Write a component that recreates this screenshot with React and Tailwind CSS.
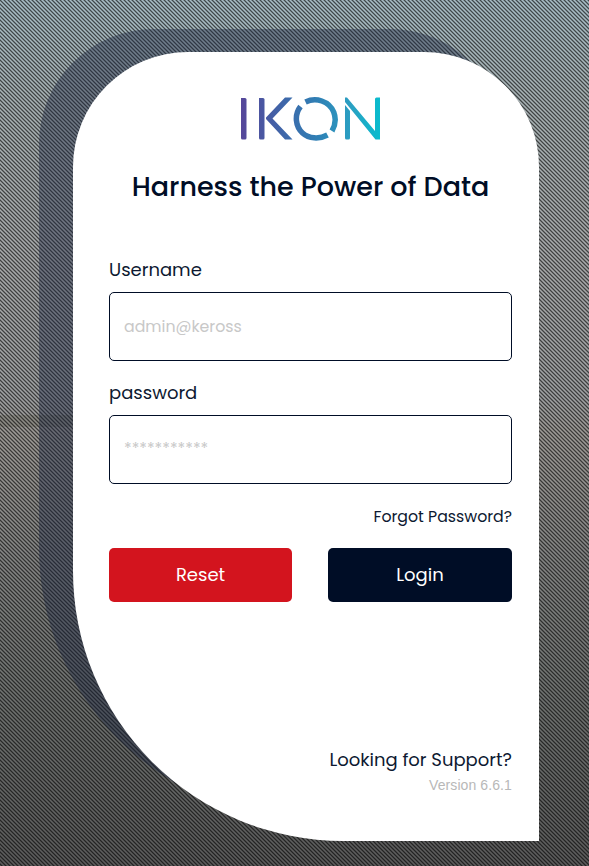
import React from "react";

function Backdrop() {
  return (
    <svg className="absolute inset-0 h-full w-full" aria-hidden="true">
      <defs>
        <linearGradient id="sky" x1="0" y1="0" x2="0" y2="1">
          <stop offset="0" stopColor="#a8bec6" />
          <stop offset="0.12" stopColor="#a8b2b4" />
          <stop offset="0.3" stopColor="#a8aaab" />
          <stop offset="0.46" stopColor="#a0a2a3" />
          <stop offset="0.5" stopColor="#9e9b97" />
          <stop offset="0.65" stopColor="#848584" />
          <stop offset="0.82" stopColor="#6e716f" />
          <stop offset="1" stopColor="#5c5c5c" />
        </linearGradient>
        <pattern id="weave" width="4" height="4" patternUnits="userSpaceOnUse" shapeRendering="crispEdges">
          <path d="M0 0h1v1h-1zM1 1h1v1h-1zM2 2h1v1h-1zM3 3h1v1h-1z" fill="#000" fillOpacity="0.62" />
          <path d="M1 0h1v1h-1zM2 1h1v1h-1zM3 2h1v1h-1zM0 3h1v1h-1z" fill="#000" fillOpacity="0.28" />
          <path d="M3 0h1v1h-1zM0 1h1v1h-1zM1 2h1v1h-1zM2 3h1v1h-1z" fill="#000" fillOpacity="0.24" />
        </pattern>
      </defs>
      <rect width="100%" height="100%" fill="url(#sky)" />
      <rect y="415" width="80" height="12" fill="#4b4d32" fillOpacity="0.2" />
      <rect width="100%" height="100%" fill="url(#weave)" />
    </svg>
  );
}

function Logo() {
  return (
    <svg width="140" height="44" viewBox="0 0 140 44" fill="none" role="img" aria-label="IKON">
      <defs>
        <linearGradient id="brand" gradientUnits="userSpaceOnUse" x1="0" y1="0" x2="140" y2="0">
          <stop offset="0" stopColor="#56479a" />
          <stop offset="0.3" stopColor="#3f66a9" />
          <stop offset="0.55" stopColor="#2f80b5" />
          <stop offset="0.78" stopColor="#2b9fc2" />
          <stop offset="1" stopColor="#08bdce" />
        </linearGradient>
      </defs>
      <g fill="url(#brand)">
        <path d="M0 1H4Q5.500 1 5.500 2.500V41Q5.500 42.500 4 42.500H1.500Q0 42.500 0 41Z" />
        <path d="M18 1H22Q23.500 1 23.500 2.500V41Q23.500 42.500 22 42.500H19.500Q18 42.500 18 41Z" />
        <path d="M44 .5H51.500L31.500 21.500L51.500 42.500H44L25 22V20.500Z" />
        <path d="M104 8L109 14V41Q109 42.500 107.500 42.500H105.500Q104 42.500 104 41Z" />
        <path d="M104 .5H106L134 34V2Q134 .5 135.500 .5H139V42.500H134.500L104 5Z" />
      </g>
      <g stroke="url(#brand)" strokeWidth="5.500">
        <path d="M64.500 5C75 0 88 4 92.700 15C95 21 94.500 28 91 34" />
        <path d="M59.500 9.500C53 18 54.500 29.500 61.500 36C68 41.800 78 42.500 86.500 38" />
      </g>
    </svg>
  );
}

export default function App() {
  return (
    <main className="relative h-[866px] w-[589px] overflow-hidden bg-[#555] font-[Poppins,Inter,sans-serif] text-[#000d26]">
      <Backdrop />
      <div className="absolute left-[39px] top-[29px] h-[789px] w-[466px] rounded-tl-[115px] rounded-tr-[115px] rounded-bl-[270px] bg-[#18233f]/40" />
      <div className="relative ml-[73px] mt-[52px] flex h-[789px] w-[466px] flex-col rounded-tl-[115px] rounded-tr-[115px] rounded-bl-[270px] bg-white pl-9 pr-[27px] pt-[45px]">
        <div className="flex h-11 justify-center">
          <Logo />
        </div>
        <h1 className="mt-[26px] whitespace-nowrap text-center text-[27px] font-medium leading-[40px]">
          Harness the Power of Data
        </h1>
        <form className="mt-[51px] flex flex-col" onSubmit={(e) => e.preventDefault()}>
          <label htmlFor="user" className="h-[34px] text-[18px] leading-[23px] text-[#0d1931]">Username</label>
          <input
            id="user"
            placeholder="admin@keross"
            className="h-[69px] rounded-[5px] border border-[#000d26] px-[14px] text-[15.75px] outline-none placeholder:text-[#c8c8c8]"
          />
          <label htmlFor="pass" className="mt-5 h-[34px] text-[18px] leading-[23px] text-[#0d1931]">password</label>
          <input
            id="pass"
            placeholder="***********"
            className="h-[69px] rounded-[5px] border border-[#000d26] px-[14px] pb-[2px] text-[15.75px] outline-none placeholder:text-[#c8c8c8]"
          />
          <a className="mt-[21px] self-end text-[15.75px] leading-6 text-[#0d1931]">Forgot Password?</a>
          <div className="mt-[19px] grid grid-cols-[183px_184px] gap-9">
            <button type="reset" className="h-[54px] rounded-[5px] bg-[#d3141e] pb-[2px] text-[18px] text-white">Reset</button>
            <button type="submit" className="h-[54px] rounded-[5px] bg-[#000d26] pb-[2px] text-[18px] text-white">Login</button>
          </div>
        </form>
        <footer className="mt-auto mb-[44px] flex flex-col items-end">
          <a className="text-[18px] leading-7 text-[#0d1931]">Looking for Support?</a>
          <span className="font-['Liberation_Sans',Arial,sans-serif] text-[14px] leading-[23px] tracking-[0.1px] text-[#b8b8b8]">Version 6.6.1</span>
        </footer>
      </div>
    </main>
  );
}
